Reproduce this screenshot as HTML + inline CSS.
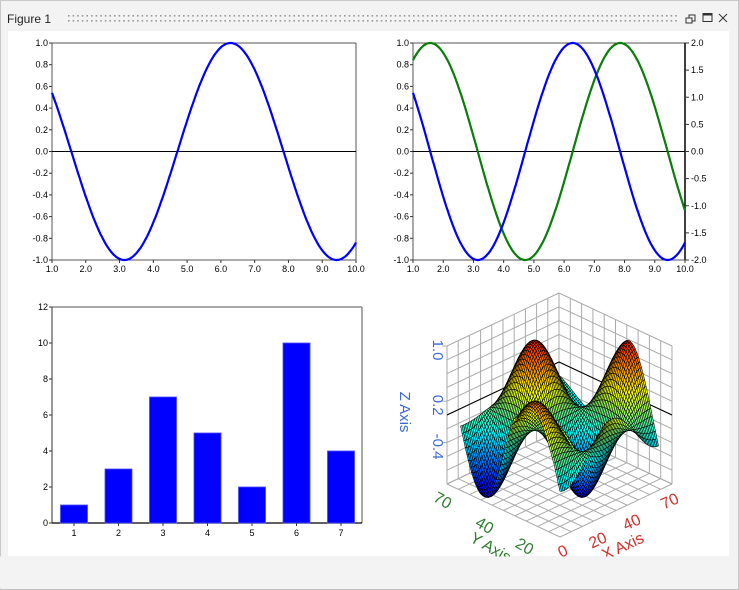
<!DOCTYPE html>
<html><head><meta charset="utf-8"><style>
html,body{margin:0;padding:0;width:739px;height:590px;overflow:hidden;background:#f3f3f3;font-family:"Liberation Sans",Arial,sans-serif}
#w{position:absolute;left:0;top:0;width:737px;height:588px;border:1px solid #c8c8c8;border-bottom-color:#bbb}
#c{position:absolute;left:8px;top:31px;width:721px;height:525px;background:#fff}
#t{position:absolute;left:7px;top:12px;font-size:12px;color:#222}
svg{position:absolute;left:0;top:0}
</style></head><body>
<div id="w"></div>
<div id="c"></div>
<div id="t">Figure 1</div>
<svg id="s" width="739" height="590" viewBox="0 0 739 590"></svg>
<script>
var S=document.getElementById('s'),h=[];
function L(x1,y1,x2,y2,c,w){h.push('<line x1="'+x1+'" y1="'+y1+'" x2="'+x2+'" y2="'+y2+'" stroke="'+c+'" stroke-width="'+(w||1)+'"/>');}
function T(x,y,s,o){o=o||{};h.push('<text x="'+x+'" y="'+y+'" font-size="'+(o.fs||9)+'" fill="'+(o.c||'#000')+'" text-anchor="'+(o.a||'middle')+'"'+(o.tr?' transform="'+o.tr+'"':'')+' font-family="Liberation Sans,Arial,sans-serif">'+s+'</text>');}
for(var x=68;x<=676;x+=4.6){h.push('<rect x="'+x.toFixed(1)+'" y="15" width="1.6" height="1.6" fill="#999"/><rect x="'+x.toFixed(1)+'" y="20" width="1.6" height="1.6" fill="#999"/>');}
h.push('<rect x="689" y="15" width="6" height="6" fill="none" stroke="#333"/><rect x="686" y="18" width="6" height="5" fill="#f3f3f3" stroke="#333"/>');
h.push('<rect x="703" y="13.5" width="9" height="8" fill="none" stroke="#333"/><rect x="703" y="13.5" width="9" height="2" fill="#333"/>');
L(719,14,727,22,'#333');L(727,14,719,22,'#333');
function plot(x0,x1,y0,y1,right){
 L(x0,y0,x1,y0,'#555');L(x1,y0,x1,y1,right?'#000':'#555',right?1.5:1);L(x0,y0,x0,y1,'#555');L(x0,y1,x1,y1,'#555');
 for(var i=0;i<=10;i++){var v=1-i*0.2,y=y0+(y1-y0)*i/10;L(x0-3,y,x0,y,'#333');T(x0-4,y+3,v.toFixed(1).replace('-0.0','0.0'),{a:'end'});}
 if(right)for(var i=0;i<=8;i++){var y=y0+(y1-y0)*i/8;L(x1,y,x1+4,y,'#333');T(x1+6,y+3,(2-i*0.5).toFixed(1).replace('-0.0','0.0'),{a:'start'});}
 for(var i=1;i<=10;i++){var x=x0+(x1-x0)*(i-1)/9;L(x,y1,x,y1+3,'#333');T(x,y1+12,i.toFixed(1));}
 var ym=(y0+y1)/2;L(x0,ym,x1,ym,'#000');
 function curve(f,c){var p=[];for(var i=0;i<=300;i++){var t=1+9*i/300;p.push((x0+(x1-x0)*(t-1)/9).toFixed(1)+','+(ym-f(t)*(y1-y0)/2).toFixed(1));}h.push('<polyline points="'+p.join(' ')+'" fill="none" stroke="'+c+'" stroke-width="2.2"/>');}
 if(right)curve(function(t){return Math.sin(t)},'#0a7d0a');
 curve(Math.cos,'#0000ff');
}
plot(52,356,43,260,false);
plot(413,685,43,260,true);
var bx0=52,bx1=362,by0=307,by1=523;
L(bx0,by0,bx1,by0,'#555');L(bx1,by0,bx1,by1,'#555');L(bx0,by0,bx0,by1,'#333');L(bx0,by1,bx1,by1,'#000',1.2);
for(var i=0;i<=6;i++){var y=by1-i*36;L(bx0-3,y,bx0,y,'#333');T(bx0-4,y+3,i*2,{a:'end'});}
[1,3,7,5,2,10,4].forEach(function(v,i){var cx=74+i*44.5;h.push('<rect x="'+(cx-13.5)+'" y="'+(by1-v*18)+'" width="27" height="'+(v*18)+'" fill="#0000ff" stroke="#4a4aff" stroke-width="0.8"/>');L(cx,by1,cx,by1+3,'#333');T(cx,by1+13,i+1);});
var FX=560,FY=537;
function P(u,v,z){return [FX+112*u-113*v, FY-53*u-53*v-69*(z+1)];}
function seg(a,b,c){L(a[0].toFixed(1),a[1].toFixed(1),b[0].toFixed(1),b[1].toFixed(1),c||'#aaa');}
var N=10;
for(var i=0;i<=N;i++){var k=i/N,z=-1+2*i/N;
 seg(P(k,0,-1),P(k,1,-1));seg(P(0,k,-1),P(1,k,-1));
 seg(P(k,1,-1),P(k,1,1));seg(P(0,1,z),P(1,1,z));
 seg(P(1,k,-1),P(1,k,1));seg(P(1,0,z),P(1,1,z));
}
seg(P(0,1,0),P(1,1,0),'#000');seg(P(1,1,0),P(1,0,0),'#000');
function Z(u,v){var z=-Math.cos(Math.PI*(u-0.04)/0.42)*Math.cos(Math.PI*(v-0.68)/0.42);var e=Math.max(0,u+v-1.25);var d=(u<0.2&&v<0.4)?0.75:1;return z/(1+30*e*e)*0.97*(z>0?d:1);}
function jet(z){var t=0.08+0.78*(z+1)/2,r=Math.min(1,Math.max(0,1.5-Math.abs(4*t-3))),g=Math.min(1,Math.max(0,1.5-Math.abs(4*t-2))),b=Math.min(1,Math.max(0,1.5-Math.abs(4*t-1)));return 'rgb('+Math.round(r*255)+','+Math.round(g*255)+','+Math.round(b*255)+')';}
var M=64,U=0.88,q=[];
for(var i=0;i<M;i++)for(var j=0;j<M;j++)q.push([i,j]);
q.sort(function(a,b){return (b[0]+b[1])-(a[0]+a[1]);});
q.forEach(function(c){var u0=c[0]/M*U,u1=(c[0]+1)/M*U,v0=c[1]/M*U,v1=(c[1]+1)/M*U;
 var zs=[Z(u0,v0),Z(u1,v0),Z(u1,v1),Z(u0,v1)],pts=[P(u0,v0,zs[0]),P(u1,v0,zs[1]),P(u1,v1,zs[2]),P(u0,v1,zs[3])];
 var zm=(zs[0]+zs[1]+zs[2]+zs[3])/4;
 h.push('<polygon points="'+pts.map(function(p){return p[0].toFixed(1)+','+p[1].toFixed(1)}).join(' ')+'" fill="'+jet(zm)+'" stroke="#000" stroke-width="0.55"/>');});
var zc='#3a6ad8';
[[1,'1.0'],[0.2,'0.2'],[-0.4,'-0.4']].forEach(function(a){var p=P(0,1,a[0]);L(p[0]-5,p[1],p[0],p[1],'#aaa');T(p[0]-10,p[1],a[1],{fs:15,c:zc,tr:'rotate(90 '+(p[0]-14)+' '+p[1]+')',a:'middle'});});
T(406,406,'Z Axis',{fs:15,c:zc,tr:'rotate(90 400 406)'});
var gc='#2e7d2e',rc='#d2302a';
[[0,'0',rc,565,556,-25],[0.3,'20',rc,600,545,-25],[0.6,'40',rc,634,527,-25],[1,'70',rc,672,506,-25]].forEach(function(a){T(a[3],a[4],a[1],{fs:16,c:a[2],tr:'rotate('+a[5]+' '+a[3]+' '+a[4]+')'});});
[[440,505,'70'],[482,530,'40'],[522,551,'20']].forEach(function(a){T(a[0],a[1],a[2],{fs:16,c:gc,tr:'rotate(30 '+a[0]+' '+a[1]+')'});});
T(488,552,'Y Axis',{fs:16,c:gc,tr:'rotate(30 488 552)'});
T(625,551,'X Axis',{fs:16,c:rc,tr:'rotate(-25 625 551)'});
h.push('<rect x="0" y="556.5" width="739" height="32" fill="#f3f3f3"/><line x1="738.5" y1="0" x2="738.5" y2="590" stroke="#c8c8c8"/><line x1="0" y1="589.5" x2="739" y2="589.5" stroke="#c0c0c0"/><line x1="0" y1="0.5" x2="739" y2="0.5" stroke="#c8c8c8"/>');
S.innerHTML=h.join('');
</script>
</body></html>
